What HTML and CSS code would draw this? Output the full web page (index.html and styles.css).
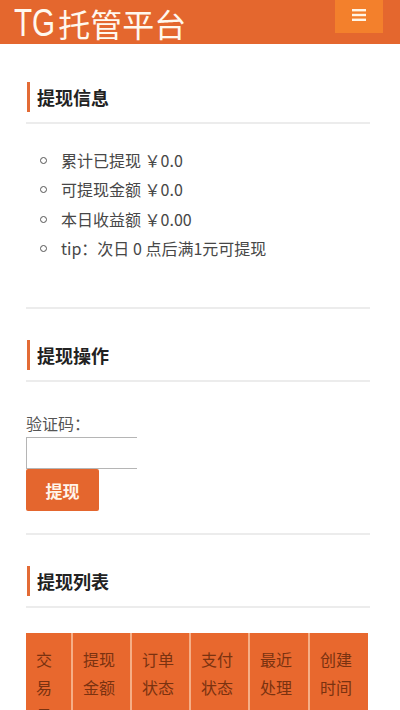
FILE: index.html
```html
<!DOCTYPE html>
<html lang="zh-CN">
<head>
<meta charset="utf-8">
<title>TG托管平台</title>
<link rel="stylesheet" href="styles.css">
</head>
<body>
<header class="topbar">
  <div class="brand"><span class="brand-latin">TG</span>托管平台</div>
  <button class="menu-btn" aria-label="菜单">
    <svg width="14" height="12" viewBox="0 0 14 12"><rect x="0" y="0" width="14" height="2.4" fill="#fff5e6"/><rect x="0" y="4.8" width="14" height="2.4" fill="#fff5e6"/><rect x="0" y="9.6" width="14" height="2.4" fill="#fff5e6"/></svg>
  </button>
</header>
<main class="content">
  <section class="panel">
    <h2 class="panel-title">提现信息</h2>
    <ul class="info-list">
      <li>累计已提现 ￥0.0</li>
      <li>可提现金额 ￥0.0</li>
      <li>本日收益额 ￥0.00</li>
      <li>tip：次日 0 点后满1元可提现</li>
    </ul>
  </section>
  <section class="panel">
    <h2 class="panel-title">提现操作</h2>
    <form class="withdraw-form">
      <label class="form-label" for="code">验证码：</label>
      <input class="form-input" id="code" type="text">
      <button class="btn-submit" type="button">提现</button>
    </form>
  </section>
  <section class="panel">
    <h2 class="panel-title">提现列表</h2>
    <table class="record-table">
      <colgroup>
        <col class="col-1"><col class="col-2"><col class="col-3"><col class="col-4"><col class="col-5"><col class="col-6">
      </colgroup>
      <thead>
        <tr>
          <th>交易号</th>
          <th>提现金额</th>
          <th>订单状态</th>
          <th>支付状态</th>
          <th>最近处理</th>
          <th>创建时间</th>
        </tr>
      </thead>
    </table>
  </section>
</main>
</body>
</html>
```
FILE: styles.css
```css
html, body {
  margin: 0;
  padding: 0;
  background: #ffffff;
}
body {
  font-family: "Noto Sans CJK SC", "Noto Sans", sans-serif;
  color: #444;
  font-size: 16px;
  width: 400px;
  overflow: hidden;
}
.topbar {
  height: 44px;
  background: #e4672e;
  display: flex;
  justify-content: space-between;
  align-items: flex-start;
  padding: 0 17px 0 14px;
}
.brand {
  color: #fff8ee;
  font-size: 32px;
  line-height: 46px;
  height: 44px;
  white-space: nowrap;
  font-family: "Noto Sans CJK SC", sans-serif;
}
.brand-latin {
  display: inline-block;
  font-family: "Liberation Sans", sans-serif;
  font-size: 39px;
  transform: scaleX(0.76);
  transform-origin: left center;
  margin-right: -10px;
  vertical-align: top;
}
.menu-btn {
  width: 48px;
  height: 33px;
  border: none;
  background: #f3802c;
  padding: 0;
  display: flex;
  align-items: center;
  justify-content: center;
}
.menu-btn svg {
  margin-top: -4px;
}
.content {
  padding: 0 30px 0 26px;
}
.panel {
  border-bottom: 2px solid #ececec;
}
.panel:first-child {
  padding-top: 38px;
}
.panel + .panel {
  padding-top: 31px;
}
.panel:last-child {
  border-bottom: none;
}
.panel-title {
  margin: 0 0 0 1px;
  font-size: 18px;
  font-weight: bold;
  color: #222;
  line-height: 30px;
  padding-left: 10px;
  background: linear-gradient(#e36b35, #e36b35) no-repeat 0 0 / 3px 30px;
}
.panel-title::after {
  content: "";
  display: block;
  height: 2px;
  background: #ececec;
  margin-left: -11px;
  margin-top: 10px;
}
.info-list {
  list-style: none;
  margin: 0;
  padding: 22px 0 44px 0;
}
.info-list li {
  position: relative;
  line-height: 29.3px;
  padding-left: 35px;
  font-size: 16px;
  color: #474747;
}
.info-list li::before {
  content: "";
  position: absolute;
  left: 14px;
  top: 11px;
  width: 5px;
  height: 5px;
  border: 1.6px solid #555;
  border-radius: 50%;
}
.withdraw-form {
  display: flex;
  flex-direction: column;
  align-items: flex-start;
  padding: 28px 0 22px 0;
}
.form-label {
  font-size: 16px;
  color: #555;
  line-height: 26px;
}
.form-input {
  box-sizing: border-box;
  width: 111px;
  height: 32px;
  margin: 1px 0 0 0;
  border: 1px solid #b5b5b5;
  border-right: none;
  padding: 0 4px;
  background: #fff;
}
.btn-submit {
  width: 73px;
  height: 42px;
  margin: 0;
  border: none;
  border-radius: 2px;
  background: #e4662e;
  color: #fff4ea;
  font-size: 17px;
  font-weight: bold;
  font-family: "Noto Sans CJK SC", sans-serif;
}
.record-table {
  margin-top: 25px;
  width: 342px;
  border-collapse: collapse;
  table-layout: fixed;
}
.record-table th {
  box-sizing: border-box;
  background: #e8682e;
  color: #7a3210;
  font-weight: normal;
  font-size: 16px;
  line-height: 28px;
  text-align: left;
  vertical-align: top;
  padding: 12px 8px 0 10px;
  border-left: 2px solid #f6ae86;
  height: 90px;
  word-break: break-all;
}
.record-table th:first-child {
  border-left: none;
}
.col-1 { width: 46px; }
.col-2 { width: 59px; }
.col-3 { width: 59px; }
.col-4 { width: 59px; }
.col-5 { width: 60px; }
.col-6 { width: 59px; }
```
